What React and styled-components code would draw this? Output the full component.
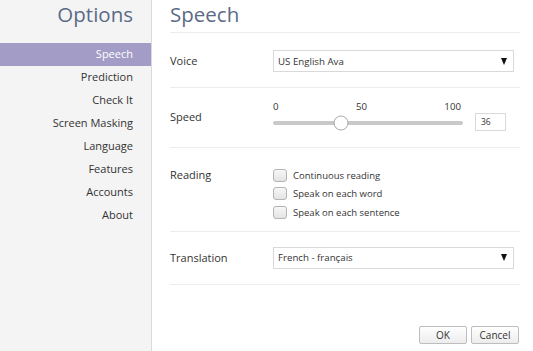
import React from "react";
import styled, { createGlobalStyle } from "styled-components";

const GlobalStyle = createGlobalStyle`
  html, body {
    margin: 0;
    padding: 0;
    background: #ffffff;
  }
  body {
    font-family: "Open Sans", "Liberation Sans", sans-serif;
    color: #333333;
  }
`;

const menu = [
  "Speech",
  "Prediction",
  "Check It",
  "Screen Masking",
  "Language",
  "Features",
  "Accounts",
  "About",
];

const readingOptions = [
  "Continuous reading",
  "Speak on each word",
  "Speak on each sentence",
];

export default function App() {
  const speed = 36;

  return (
    <Page>
      <GlobalStyle />
      <Sidebar>
        <SideTitle>Options</SideTitle>
        <Menu>
          {menu.map((item) => (
            <MenuItem key={item} $active={item === "Speech"}>
              {item}
            </MenuItem>
          ))}
        </Menu>
      </Sidebar>

      <Main>
        <Heading>Speech</Heading>

        <Row $pad="17px 0 15px">
          <Label>Voice</Label>
          <Select>
            <span>US English Ava</span>
            <Caret />
          </Select>
        </Row>

        <Row $pad="12px 0 14px">
          <Label>Speed</Label>
          <SliderWrap>
            <Scale>
              <span>0</span>
              <span>50</span>
              <span>100</span>
            </Scale>
            <Track>
              <Thumb style={{ left: `${speed}%` }} />
            </Track>
          </SliderWrap>
          <NumberBox>{speed}</NumberBox>
        </Row>

        <Row $pad="18px 0 9px" $top>
          <Label>Reading</Label>
          <CheckList>
            {readingOptions.map((opt) => (
              <CheckRow key={opt}>
                <Box />
                {opt}
              </CheckRow>
            ))}
          </CheckList>
        </Row>

        <Row $pad="15px 0 15px">
          <Label>Translation</Label>
          <Select>
            <span>French - français</span>
            <Caret />
          </Select>
        </Row>

        <Footer>
          <Button>OK</Button>
          <Button>Cancel</Button>
        </Footer>
      </Main>
    </Page>
  );
}

const Page = styled.div`
  display: grid;
  grid-template-columns: 152px 1fr;
  height: 351px;
  width: 533px;
  overflow: hidden;
`;

const Sidebar = styled.aside`
  background: #f4f4f4;
  border-right: 1px solid #dadada;
  display: flex;
  flex-direction: column;
`;

const SideTitle = styled.h1`
  margin: 0;
  height: 43px;
  padding: 0 18px 0 0;
  text-align: right;
  font-size: 20.5px;
  font-weight: 400;
  line-height: 29px;
  color: #5b6a86;
`;

const Menu = styled.nav`
  display: flex;
  flex-direction: column;
`;

const MenuItem = styled.div`
  height: 23px;
  line-height: 22px;
  padding-right: 18px;
  text-align: right;
  font-size: 11px;
  color: ${(p) => (p.$active ? "#ffffff" : "#333333")};
  background: ${(p) => (p.$active ? "#a29cc6" : "transparent")};
`;

const Main = styled.main`
  display: flex;
  flex-direction: column;
  padding: 0 13px 0 18px;
`;

const Heading = styled.h2`
  margin: 0;
  height: 32px;
  font-size: 20.5px;
  font-weight: 400;
  line-height: 29px;
  color: #5b6a86;
  border-bottom: 1px solid #ececec;
`;

const Row = styled.div`
  display: flex;
  align-items: ${(p) => (p.$top ? "flex-start" : "center")};
  padding: ${(p) => p.$pad};
  border-bottom: 1px solid #ececec;
`;

const Label = styled.div`
  width: 103px;
  flex: none;
  font-size: 11px;
  line-height: 18px;
`;

const Select = styled.div`
  flex: 1;
  height: 22px;
  box-sizing: border-box;
  margin-right: 6px;
  border: 1px solid #d9d9d9;
  background: #ffffff;
  display: flex;
  align-items: center;
  justify-content: space-between;
  padding: 0 6px 0 4px;
  font-size: 9.7px;
`;

const Caret = styled.span`
  width: 0;
  height: 0;
  border-left: 3.5px solid transparent;
  border-right: 3.5px solid transparent;
  border-top: 7px solid #111111;
`;

const SliderWrap = styled.div`
  width: 190px;
  display: flex;
  flex-direction: column;
  gap: 7px;
`;

const Scale = styled.div`
  display: flex;
  justify-content: space-between;
  font-size: 9.7px;
  line-height: 14px;
  padding-right: 2px;
`;

const Track = styled.div`
  position: relative;
  height: 4px;
  border-radius: 2px;
  background: #c9c9c9;
  margin-bottom: 8px;
`;

const Thumb = styled.div`
  position: absolute;
  top: 50%;
  width: 15px;
  height: 15px;
  box-sizing: border-box;
  border-radius: 50%;
  border: 1px solid #a8a8a8;
  background: #ffffff;
  transform: translate(-50%, -50%);
`;

const NumberBox = styled.div`
  margin: 10px 0 0 12px;
  width: 31px;
  height: 18px;
  box-sizing: border-box;
  border: 1px solid #d9d9d9;
  font-size: 8.5px;
  line-height: 16px;
  padding-left: 5px;
`;

const CheckList = styled.div`
  display: flex;
  flex-direction: column;
`;

const CheckRow = styled.label`
  display: flex;
  align-items: center;
  gap: 6px;
  height: 18.5px;
  font-size: 9.5px;
`;

const Box = styled.span`
  width: 14px;
  height: 13px;
  box-sizing: border-box;
  border: 1px solid #b3b3b3;
  border-radius: 3px;
  background: linear-gradient(#f7f7f7, #e4e4e4);
`;

const Footer = styled.div`
  margin-top: auto;
  margin-bottom: 7px;
  display: flex;
  justify-content: flex-end;
  gap: 4px;
  padding-right: 1px;
`;

const Button = styled.button`
  width: 48px;
  height: 18px;
  padding: 0;
  border: 1px solid #bdbdbd;
  border-radius: 2px;
  background: linear-gradient(#ffffff, #ececec);
  font-family: "Open Sans", "Liberation Sans", sans-serif;
  font-size: 10px;
  color: #333333;
`;
